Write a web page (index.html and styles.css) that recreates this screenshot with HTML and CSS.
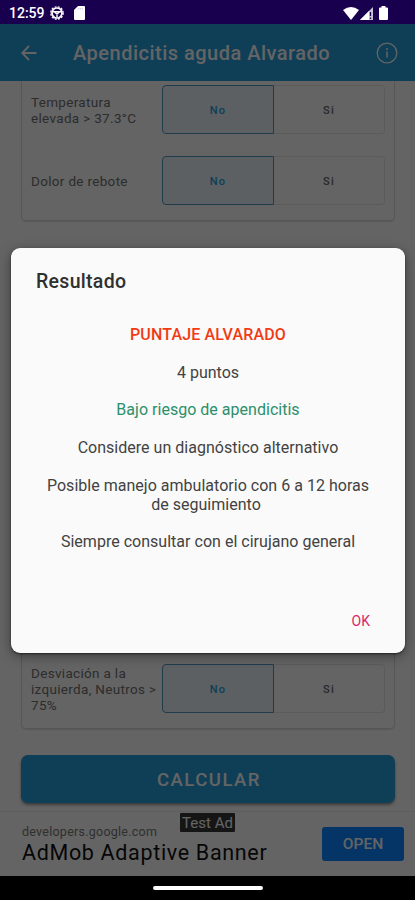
FILE: index.html
```html
<!DOCTYPE html>
<html lang="es">
<head>
    <meta charset="UTF-8">
    <meta name="viewport" content="width=device-width, initial-scale=1.0">
    <link rel="stylesheet" href="styles.css">
    <title>Apendicitis aguda Alvarado</title>
</head>
<body>
    <div class="pantalla">
        <div class="estado">
            <span class="hora">12:59</span>
            <svg class="ico-ajustes" width="14" height="14" viewBox="0 0 14 14">
                <circle cx="7" cy="7" r="5" fill="none" stroke="#fff" stroke-width="1.7"/>
                <circle cx="7" cy="7" r="6.2" fill="none" stroke="#fff" stroke-width="1.3" stroke-dasharray="2 1.25"/>
                <path d="M3 5.7h8M7 7v4M4.5 6l2.5 2 2.5-2" fill="none" stroke="#fff" stroke-width="1.4"/>
            </svg>
            <svg class="ico-sd" width="11" height="14" viewBox="0 0 11 14">
                <path d="M4 0h6q1 0 1 1v12q0 1-1 1H1q-1 0-1-1V4z" fill="#fff"/>
                <path d="M4.3 2v1.6M6.3 2v1.6M8.3 2v1.6" stroke="#b9b2ca" stroke-width=".7"/>
            </svg>
            <div class="estado-der">
                <svg width="16" height="13" viewBox="0 0 16 13"><path d="M0 3Q8-3 16 3L8 13z" fill="#fff"/></svg>
                <svg width="13" height="13" viewBox="0 0 13 13">
                    <path d="M13 0v13H0z" fill="#c9c4d6"/>
                    <path d="M9 4v9H0z" fill="#fff"/>
                    <path d="M10.5 5v4M10.5 10.5v1.5" stroke="#18004f" stroke-width="1.3"/>
                </svg>
                <svg class="ico-bateria" width="9" height="14" viewBox="0 0 9 14"><path d="M2.5 0h4v1.500H8q1 0 1 1V13q0 1-1 1H1q-1 0-1-1V2.500q0-1 1-1h1.500z" fill="#fff"/></svg>
            </div>
        </div>

        <header class="cabecera">
            <svg class="ico-volver" width="16" height="16" viewBox="0 0 16 16">
                <path d="M15.5 8H1.5M8 1L1.2 8 8 15" fill="none" stroke="#fafafa" stroke-width="1.8"/>
            </svg>
            <h1>Apendicitis aguda Alvarado</h1>
            <svg class="ico-info" width="22" height="22" viewBox="0 0 22 22">
                <circle cx="11" cy="11" r="9.8" fill="none" stroke="#fafafa" stroke-width="1.3"/>
                <path d="M11 9.5v6M11 6v2" stroke="#fafafa" stroke-width="1.5"/>
            </svg>
        </header>

        <main class="contenido">
            <section class="tarjeta primera">
                <div class="fila">
                    <span class="etiqueta">Temperatura<br>elevada &gt; 37.3°C</span>
                    <div class="opciones">
                        <button class="activo">No</button>
                        <button>Si</button>
                    </div>
                </div>
                <div class="fila">
                    <span class="etiqueta">Dolor de rebote</span>
                    <div class="opciones">
                        <button class="activo">No</button>
                        <button>Si</button>
                    </div>
                </div>
            </section>

            <section class="tarjeta segunda">
                <div class="fila">
                    <span class="etiqueta">Desviación a la<br>izquierda, Neutros &gt;<br>75%</span>
                    <div class="opciones">
                        <button class="activo">No</button>
                        <button>Si</button>
                    </div>
                </div>
            </section>

            <button class="calcular">CALCULAR</button>
        </main>

        <div class="anuncio">
            <div class="anuncio-texto">
                <span class="dominio">developers.google.com</span>
                <span class="titulo-anuncio">AdMob Adaptive Banner</span>
            </div>
            <span class="test">Test Ad</span>
            <button class="abrir">OPEN</button>
        </div>

        <div class="navegacion"><span></span></div>

        <div class="fondo">
            <div class="dialogo">
                <h2>Resultado</h2>
                <p class="puntaje">PUNTAJE ALVARADO</p>
                <p>4 puntos</p>
                <p class="riesgo">Bajo riesgo de apendicitis</p>
                <p>Considere un diagnóstico alternativo</p>
                <p>Posible manejo ambulatorio con 6 a 12 horas<br><span class="segunda-linea">de seguimiento</span></p>
                <p>Siempre consultar con el cirujano general</p>
                <button class="ok">OK</button>
            </div>
        </div>
    </div>
</body>
</html>
```

FILE: styles.css
```css
* {
    margin: 0;
    padding: 0;
    box-sizing: border-box;
}
body {
    font-family: Roboto, "Liberation Sans", sans-serif;
    background-color: #000;
}
button {
    font-family: inherit;
    border: none;
    background: none;
}
svg {display: block;}
.pantalla {
    position: relative;
    display: flex;
    flex-direction: column;
    width: 415px;
    height: 900px;
    overflow: hidden;
    background-color: #fafafa;
}

/* barra de estado */
.estado {
    display: flex;
    align-items: center;
    height: 24px;
    flex: none;
    padding: 2px 27px 0 9px;
    background-color: #18004f;
    color: #fff;
}
.hora {
    width: 36px;
    font-size: 14px;
    font-weight: 500;
    white-space: nowrap;
}
.ico-ajustes {margin-left: 5px;}
.ico-sd {margin-left: 10px;}
.estado-der {
    display: flex;
    align-items: center;
    margin-left: auto;
}
.ico-bateria {margin-left: 6px;}
.estado-der svg:nth-child(2) {margin-left: 1px;}

.cabecera {
    display: flex;
    align-items: center;
    height: 57px;
    flex: none;
    padding: 1px 17px 0 21px;
    background-color: #269bda;
    color: #fafafa;
}
.cabecera h1 {
    margin-left: 36px;
    font-size: 20px;
    font-weight: 500;
    letter-spacing: .49px;
    white-space: nowrap;
}
.ico-info {margin-left: auto;}

/* formulario */
.contenido {
    flex: 1;
    padding: 0 20px 0 21px;
    overflow: hidden;
}
.tarjeta {
    display: flex;
    flex-direction: column;
    padding: 0 9px 15px 9px;
    border: 1px solid #d8d8d8;
    border-radius: 5px;
    box-shadow: 0 1px 1px rgba(0, 0, 0, .12);
}
.primera {
    height: 140px;
    padding-top: 4px;
    gap: 22px;
    border-top: none;
    border-radius: 0 0 5px 5px;
}
.segunda {
    justify-content: flex-end;
    height: 480px;
    margin-top: 28px;
}
.fila {
    display: flex;
    align-items: center;
    justify-content: space-between;
    height: 49px;
    flex: none;
}
.etiqueta {
    font-size: 13.5px;
    line-height: 16px;
    letter-spacing: .32px;
    color: #707070;
    white-space: nowrap;
}
.opciones {
    display: flex;
    width: 223px;
    height: 49px;
}
.opciones button {
    width: 111px;
    padding-top: 2px;
    border: 1px solid #e4e4e4;
    border-left: none;
    border-radius: 0 4px 4px 0;
    font-size: 11px;
    font-weight: 500;
    letter-spacing: 1.3px;
    color: #686868;
}
.opciones .activo {
    width: 112px;
    border: 1px solid #5096bd;
    border-radius: 4px 0 0 4px;
    background-color: #e6f1f5;
    color: #269bda;
}
.calcular {
    display: block;
    width: 100%;
    height: 48px;
    margin-top: 26px;
    padding: 2px 0 0 2px;
    border-radius: 7px;
    background-color: #269bda;
    box-shadow: 0 2px 3px rgba(0, 0, 0, .4);
    color: #fafafa;
    font-size: 18.5px;
    font-weight: 500;
    letter-spacing: 1.5px;
}

/* banner de publicidad */
.anuncio {
    position: relative;
    display: flex;
    align-items: center;
    justify-content: space-between;
    height: 65px;
    flex: none;
    padding: 0 11px 0 22px;
    border-top: 1px solid #eaeaea;
}
.anuncio-texto {
    display: flex;
    flex-direction: column;
    padding-top: 1px;
    white-space: nowrap;
}
.dominio {
    font-size: 12.5px;
    line-height: 16px;
    letter-spacing: .25px;
    color: #777;
}
.titulo-anuncio {
    font-size: 21.5px;
    line-height: 26px;
    letter-spacing: .67px;
    color: #111;
}
.test {
    position: absolute;
    top: 1px;
    left: 180px;
    width: 55px;
    height: 19px;
    border-radius: 1px;
    background-color: #363636;
    color: #fafafa;
    font-size: 15px;
    line-height: 20px;
    text-align: center;
}
.abrir {
    width: 82px;
    height: 34px;
    border-radius: 3px;
    background-color: #0b84ff;
    color: #fafafa;
    font-size: 15.5px;
    font-weight: 500;
}

.navegacion {
    display: flex;
    justify-content: center;
    height: 24px;
    flex: none;
    padding-top: 10px;
    background-color: #000;
}
.navegacion span {
    width: 110px;
    height: 4px;
    border-radius: 2px;
    background-color: #fff;
}

/* ventana de resultado */
.estado, .navegacion {
    position: relative;
    z-index: 2;
}
.fondo {
    position: absolute;
    inset: 0;
    padding: 248px 10px 0 11px;
    background-color: rgba(0, 0, 0, .6);
}
.dialogo {
    display: flex;
    flex-direction: column;
    height: 405px;
    padding: 21px 25px 18px 25px;
    border-radius: 9px;
    background-color: #fafafa;
    box-shadow: 0 3px 12px rgba(0, 0, 0, .4), 0 1px 2px rgba(0, 0, 0, .5);
    color: #424242;
}
.dialogo h2 {
    margin-bottom: 30px;
    font-size: 19.5px;
    font-weight: 500;
    line-height: 26px;
    letter-spacing: .3px;
    color: #303030;
}
.dialogo p {
    margin-bottom: 18.7px;
    font-size: 16px;
    line-height: 19px;
    letter-spacing: .02px;
    text-align: center;
    white-space: nowrap;
}
.dialogo .puntaje {
    color: #f13a14;
    font-weight: 500;
    letter-spacing: .15px;
}
.dialogo .riesgo {color: #2b8f6b;}
.segunda-linea {padding-right: 4px;}
.ok {
    margin: auto 10px 0 0;
    align-self: flex-end;
    font-size: 14px;
    line-height: 27px;
    color: #d8286a;
}
```
